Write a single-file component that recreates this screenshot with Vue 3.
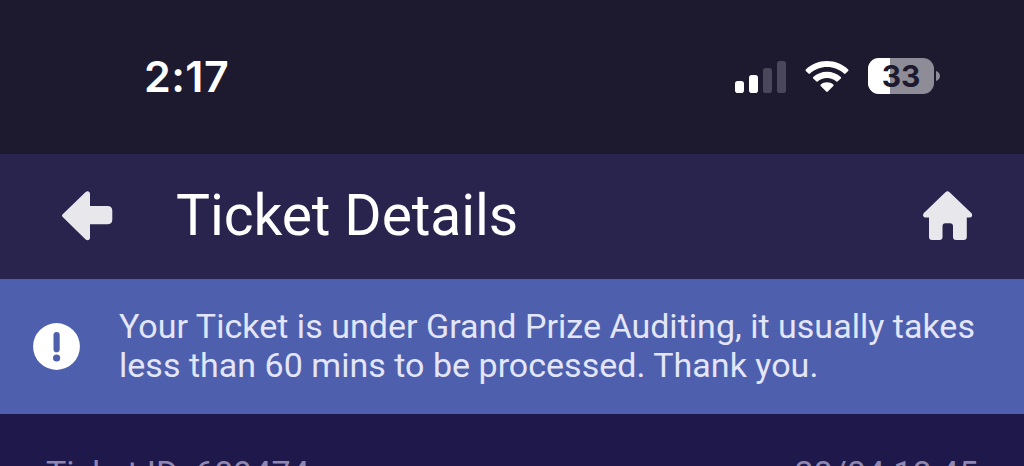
<template>
  <div class="screen">
    <div class="status-bar">
      <span class="time">{{ time }}</span>
      <div class="status-icons">
        <svg class="signal" width="52" height="34" viewBox="0 0 52 34">
          <rect x="0" y="21" width="9" height="12" rx="2.8" fill="#fff" />
          <rect x="14" y="15" width="9" height="18" rx="2.8" fill="#fff" />
          <rect x="28" y="8" width="9" height="25" rx="2.8" fill="#4a475a" />
          <rect x="42" y="1" width="9" height="32" rx="2.8" fill="#4a475a" />
        </svg>
        <svg class="wifi" width="44" height="34" viewBox="0 0 44 34">
          <path d="M22 1C13.800 1 6.300 4.200 .800 9.400Q.100 10.100.800 10.900L3.500 13.600Q4.200 14.300 5 13.600C9.500 9.500 15.500 7.100 22 7.100S34.500 9.500 39 13.600Q39.800 14.300 40.500 13.600L43.200 10.900Q43.900 10.100 43.200 9.400C37.700 4.200 30.200 1 22 1Z" />
          <path d="M22 11.700C16.700 11.700 11.900 13.700 8.200 17Q7.500 17.700 8.200 18.400L11.200 21.300Q11.900 22 12.600 21.400C15.100 19.200 18.400 17.900 22 17.900S28.900 19.200 31.400 21.400Q32.100 22 32.800 21.300L35.800 18.400Q36.500 17.700 35.800 17C32.100 13.700 27.300 11.700 22 11.700Z" />
          <path d="M22 22.300C19.600 22.300 17.400 23.100 15.700 24.500Q15 25.100 15.700 25.900L21.200 31.500Q22 32.300 22.800 31.500L28.300 25.900Q29 25.100 28.300 24.500C26.600 23.100 24.400 22.300 22 22.300Z" />
        </svg>
        <div class="battery">
          <div class="battery-body">
            <div class="battery-fill" :style="{ width: battery + '%' }"></div>
            <span class="battery-text">{{ battery }}</span>
          </div>
          <svg class="battery-tip" width="4" height="10" viewBox="0 0 4 10">
            <path d="M0 0C2.500.800 4 2.700 4 5S2.500 9.200 0 10Z" />
          </svg>
        </div>
      </div>
    </div>

    <header class="header">
      <svg class="back" width="52" height="50" viewBox="0 0 52 50">
        <path d="M.700 23.200 23.400 1.300C25.300-.500 28 .200 28 3V15H45.500Q50.300 15 50.300 19.800V28.500Q50.300 33.300 45.500 33.300H28V46.500C28 49.300 25.300 50 23.400 48.200L.700 26Q-.700 24.600.700 23.200Z" />
      </svg>
      <h1 class="title">Ticket Details</h1>
      <svg class="home" width="50" height="50" viewBox="0 0 50 50">
        <path d="M22.400 1.200Q24.500-.800 26.600 1.200L48.300 22.100Q49.500 23.500 49 25Q48.500 26.600 46.500 26.600H43.800V46Q43.800 49 40.800 49H33Q30 49 30 46V35.500Q30 32.200 27 32.200H22.500Q19.500 32.200 19.500 35.500V46Q19.500 49 16.500 49H9Q6 49 6 46V26.600H2.700Q.800 26.600.200 25Q-.300 23.500.900 22.100Z" />
      </svg>
    </header>

    <div class="notice">
      <svg class="alert" width="48" height="48" viewBox="0 0 48 48">
        <circle cx="23.500" cy="23.500" r="23.400" fill="#fff" />
        <rect x="20.500" y="9" width="6.200" height="20.300" rx="3.100" fill="#4e5fae" />
        <circle cx="23.600" cy="35" r="3.600" fill="#4e5fae" />
      </svg>
      <p class="notice-text">
        Your Ticket is under Grand Prize Auditing, it usually takes<br />
        less than 60 mins to be processed. Thank you.
      </p>
    </div>

    <div class="ticket">
      <span>Ticket ID: {{ ticket.id }}</span>
      <span>{{ ticket.date }}</span>
    </div>
  </div>
</template>

<script setup>
import { ref } from 'vue';

const time = ref('2:17');
const battery = ref(33);
const ticket = ref({ id: '689474', date: '28/04 18:45' });
</script>

<style>
body {
  margin: 0;
  background: #1f184a;
}
</style>

<style scoped>
.screen {
  height: 466px;
  display: flex;
  flex-direction: column;
  overflow: hidden;
  font-family: Roboto, sans-serif;
  background: #1f184a;
}

.status-bar {
  height: 154px;
  flex: none;
  box-sizing: border-box;
  padding: 0 84px 0 144px;
  display: flex;
  align-items: center;
  justify-content: space-between;
  background: #1d1a2f;
}

.time {
  margin-bottom: 2px;
  color: #fff;
  font: 600 43px/50px Inter, sans-serif;
  letter-spacing: 0.4px;
}

.status-icons {
  display: flex;
  align-items: center;
}

.signal,
.wifi {
  margin-bottom: 1px;
}

.wifi {
  margin-left: 18px;
  fill: #fff;
}

.battery {
  margin-left: 19px;
  margin-bottom: 2px;
  display: flex;
  align-items: center;
}

.battery-body {
  position: relative;
  width: 66px;
  height: 36px;
  border-radius: 11px;
  overflow: hidden;
  background: #8e8c97;
}

.battery-fill {
  height: 100%;
  background: #fff;
}

.battery-text {
  position: absolute;
  inset: 0;
  text-align: center;
  color: #1d1a2f;
  font: 700 30px/37px Inter, sans-serif;
}

.battery-tip {
  margin-left: 2px;
  fill: #8e8c97;
}

.header {
  height: 125px;
  flex: none;
  box-sizing: border-box;
  padding: 0 51px 2px 62px;
  display: flex;
  align-items: center;
  background: #28244e;
}

.back,
.home {
  flex: none;
  fill: #e8e8ec;
}

.home {
  margin-top: 1px;
}

.title {
  flex: 1;
  margin: 0 0 0 62px;
  color: #fff;
  font-size: 57px;
  font-weight: 400;
  line-height: 66px;
  letter-spacing: -0.1px;
}

.notice {
  height: 135px;
  flex: none;
  box-sizing: border-box;
  padding-left: 33px;
  display: flex;
  align-items: center;
  background: #4e5fae;
}

.alert {
  flex: none;
}

.notice-text {
  margin: 0 0 2px 38px;
  color: #e3e6f8;
  font-size: 34px;
  line-height: 39px;
  letter-spacing: 0.02px;
  white-space: nowrap;
}

.ticket {
  flex: 1;
  padding: 39px 46px 0;
  display: flex;
  justify-content: space-between;
  color: #8f87b0;
  font-size: 34px;
  line-height: 40px;
  white-space: nowrap;
}
</style>
